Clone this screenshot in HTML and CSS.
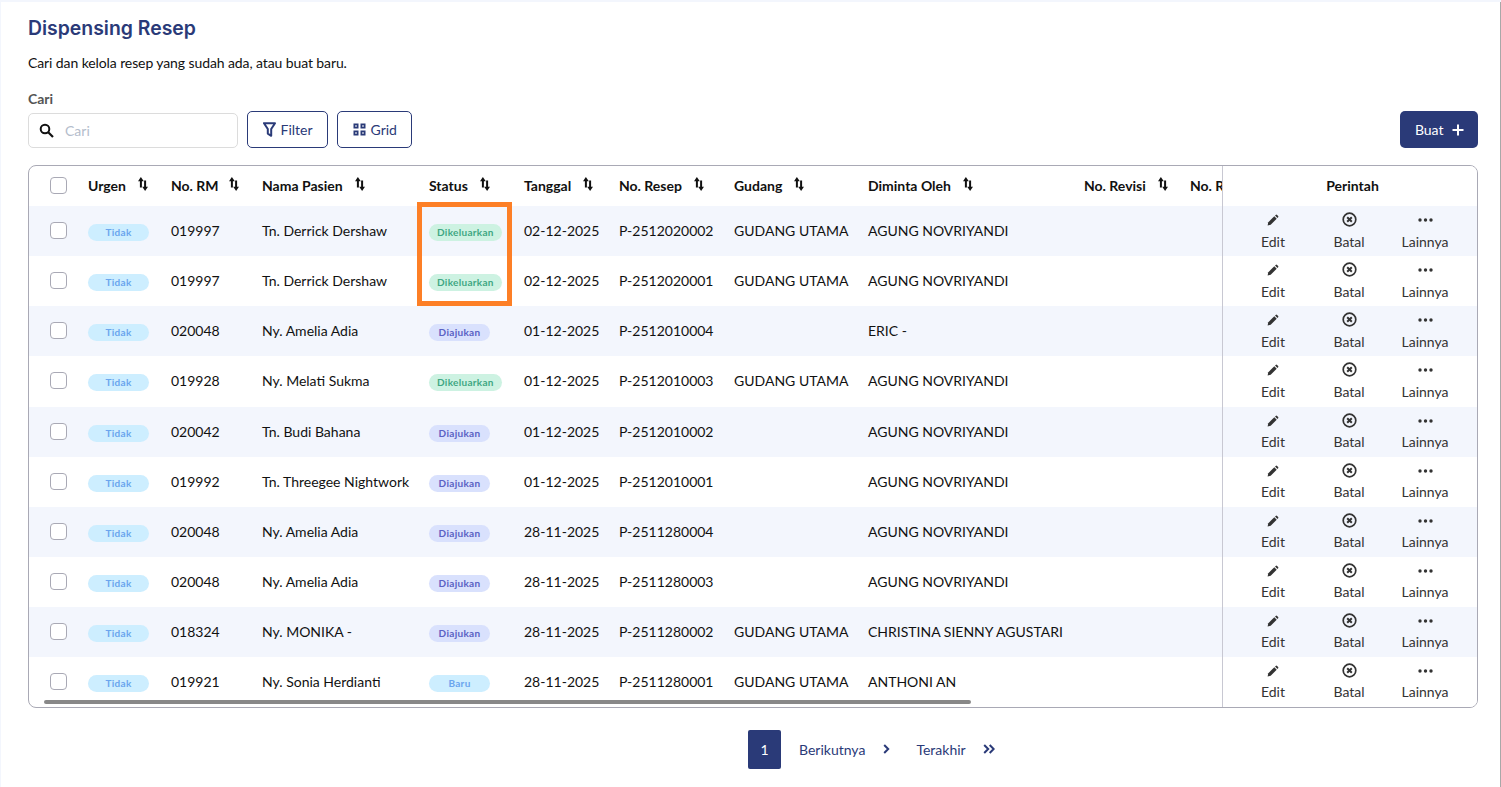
FILE: index.html
```html
<!DOCTYPE html>
<html lang="id">
<head>
<meta charset="utf-8">
<title>Dispensing Resep</title>
<link rel="stylesheet" href="styles.css">
</head>
<body>
<svg class="defs" width="0" height="0" aria-hidden="true">
  <symbol id="sort" viewBox="0 0 10 14"><path d="M1.900 10.500V3.500H3.900V10.500Z" fill="#111"/><path d="M2.900 0 5.800 4.200H0Z" fill="#111"/><path d="M6.100 3.500V10.500H8.100V3.500Z" fill="#111"/><path d="M7.100 14 4.200 9.800H10Z" fill="#111"/></symbol>
  <symbol id="edit" viewBox="0 0 12 12"><path d="M.6 11.400 1.300 8.300 7.300 2.300 9.700 4.700 3.700 10.700Z" fill="#333"/><path d="M8 1.600 8.700.9a1 1 0 0 1 1.400 0l1 1a1 1 0 0 1 0 1.400L10.400 4Z" fill="#333"/></symbol>
  <symbol id="cancel" viewBox="0 0 15 15"><circle cx="7.500" cy="7.500" r="6.300" fill="none" stroke="#333" stroke-width="1.700"/><path d="M5.200 5.200l4.600 4.600M9.800 5.200l-4.600 4.600" stroke="#333" stroke-width="2"/></symbol>
  <symbol id="more" viewBox="0 0 15 4"><circle cx="2" cy="2" r="1.700" fill="#333"/><circle cx="7.500" cy="2" r="1.700" fill="#333"/><circle cx="13" cy="2" r="1.700" fill="#333"/></symbol>
</svg>
<main class="page">
  <h1 class="title">Dispensing Resep</h1>
  <p class="subtitle">Cari dan kelola resep yang sudah ada, atau buat baru.</p>
  <div class="toolbar">
    <div class="search-group">
      <label class="search-label" for="q">Cari</label>
      <div class="search-box">
        <svg class="search-icon" width="15" height="15" viewBox="0 0 15 15"><circle cx="6" cy="6" r="4.300" fill="none" stroke="#111" stroke-width="2"/><path d="M9.200 9.200 14 14" stroke="#111" stroke-width="2.200"/></svg>
        <input id="q" class="search-input" placeholder="Cari">
      </div>
    </div>
    <button class="btn btn-outline"><svg width="13" height="15" viewBox="0 0 13 15"><path d="M1 1.200h11L8.200 7v6.800L4.800 11.600V7Z" fill="none" stroke="#2a3a78" stroke-width="2" stroke-linejoin="round"/></svg>Filter</button>
    <button class="btn btn-outline"><svg width="13" height="13" viewBox="0 0 13 13"><path d="M.5.5h5v5h-5ZM7.500.5h5v5h-5ZM.5 7.500h5v5h-5ZM7.500 7.500h5v5h-5Z" fill="#2a3a78"/><path d="M2.300 2.300h1.400v1.400H2.300ZM9.300 2.300h1.400v1.400H9.300ZM2.300 9.300h1.400v1.400H2.300ZM9.300 9.300h1.400v1.400H9.300Z" fill="#fff"/></svg>Grid</button>
    <button class="btn btn-primary">Buat<svg width="12" height="12" viewBox="0 0 12 12"><path d="M6 .5v11M.5 6h11" stroke="#fff" stroke-width="2"/></svg></button>
  </div>

  <section class="table">
    <div class="scroll">
      <div class="row head">
        <span class="cell"><i class="check"></i></span>
        <span class="cell">Urgen<svg class="sort"><use href="#sort"/></svg></span>
        <span class="cell">No. RM<svg class="sort sort-tight"><use href="#sort"/></svg></span>
        <span class="cell">Nama Pasien<svg class="sort"><use href="#sort"/></svg></span>
        <span class="cell">Status<svg class="sort"><use href="#sort"/></svg></span>
        <span class="cell">Tanggal<svg class="sort"><use href="#sort"/></svg></span>
        <span class="cell">No. Resep<svg class="sort"><use href="#sort"/></svg></span>
        <span class="cell">Gudang<svg class="sort"><use href="#sort"/></svg></span>
        <span class="cell">Diminta Oleh<svg class="sort"><use href="#sort"/></svg></span>
        <span class="cell">No. Revisi<svg class="sort"><use href="#sort"/></svg></span>
        <span class="cell">No. Racikan</span>
      </div>
      <div class="row"><span class="cell"><i class="check"></i></span><span class="cell"><b class="badge blue">Tidak</b></span><span class="cell">019997</span><span class="cell">Tn. Derrick Dershaw</span><span class="cell"><b class="badge green">Dikeluarkan</b></span><span class="cell">02-12-2025</span><span class="cell">P-2512020002</span><span class="cell">GUDANG UTAMA</span><span class="cell">AGUNG NOVRIYANDI</span><span class="cell"></span><span class="cell"></span></div>
      <div class="row"><span class="cell"><i class="check"></i></span><span class="cell"><b class="badge blue">Tidak</b></span><span class="cell">019997</span><span class="cell">Tn. Derrick Dershaw</span><span class="cell"><b class="badge green">Dikeluarkan</b></span><span class="cell">02-12-2025</span><span class="cell">P-2512020001</span><span class="cell">GUDANG UTAMA</span><span class="cell">AGUNG NOVRIYANDI</span><span class="cell"></span><span class="cell"></span></div>
      <div class="row"><span class="cell"><i class="check"></i></span><span class="cell"><b class="badge blue">Tidak</b></span><span class="cell">020048</span><span class="cell">Ny. Amelia Adia</span><span class="cell"><b class="badge indigo">Diajukan</b></span><span class="cell">01-12-2025</span><span class="cell">P-2512010004</span><span class="cell"></span><span class="cell">ERIC -</span><span class="cell"></span><span class="cell"></span></div>
      <div class="row"><span class="cell"><i class="check"></i></span><span class="cell"><b class="badge blue">Tidak</b></span><span class="cell">019928</span><span class="cell">Ny. Melati Sukma</span><span class="cell"><b class="badge green">Dikeluarkan</b></span><span class="cell">01-12-2025</span><span class="cell">P-2512010003</span><span class="cell">GUDANG UTAMA</span><span class="cell">AGUNG NOVRIYANDI</span><span class="cell"></span><span class="cell"></span></div>
      <div class="row"><span class="cell"><i class="check"></i></span><span class="cell"><b class="badge blue">Tidak</b></span><span class="cell">020042</span><span class="cell">Tn. Budi Bahana</span><span class="cell"><b class="badge indigo">Diajukan</b></span><span class="cell">01-12-2025</span><span class="cell">P-2512010002</span><span class="cell"></span><span class="cell">AGUNG NOVRIYANDI</span><span class="cell"></span><span class="cell"></span></div>
      <div class="row"><span class="cell"><i class="check"></i></span><span class="cell"><b class="badge blue">Tidak</b></span><span class="cell">019992</span><span class="cell">Tn. Threegee Nightwork</span><span class="cell"><b class="badge indigo">Diajukan</b></span><span class="cell">01-12-2025</span><span class="cell">P-2512010001</span><span class="cell"></span><span class="cell">AGUNG NOVRIYANDI</span><span class="cell"></span><span class="cell"></span></div>
      <div class="row"><span class="cell"><i class="check"></i></span><span class="cell"><b class="badge blue">Tidak</b></span><span class="cell">020048</span><span class="cell">Ny. Amelia Adia</span><span class="cell"><b class="badge indigo">Diajukan</b></span><span class="cell">28-11-2025</span><span class="cell">P-2511280004</span><span class="cell"></span><span class="cell">AGUNG NOVRIYANDI</span><span class="cell"></span><span class="cell"></span></div>
      <div class="row"><span class="cell"><i class="check"></i></span><span class="cell"><b class="badge blue">Tidak</b></span><span class="cell">020048</span><span class="cell">Ny. Amelia Adia</span><span class="cell"><b class="badge indigo">Diajukan</b></span><span class="cell">28-11-2025</span><span class="cell">P-2511280003</span><span class="cell"></span><span class="cell">AGUNG NOVRIYANDI</span><span class="cell"></span><span class="cell"></span></div>
      <div class="row"><span class="cell"><i class="check"></i></span><span class="cell"><b class="badge blue">Tidak</b></span><span class="cell">018324</span><span class="cell">Ny. MONIKA -</span><span class="cell"><b class="badge indigo">Diajukan</b></span><span class="cell">28-11-2025</span><span class="cell">P-2511280002</span><span class="cell">GUDANG UTAMA</span><span class="cell">CHRISTINA SIENNY AGUSTARI</span><span class="cell"></span><span class="cell"></span></div>
      <div class="row"><span class="cell"><i class="check"></i></span><span class="cell"><b class="badge blue">Tidak</b></span><span class="cell">019921</span><span class="cell">Ny. Sonia Herdianti</span><span class="cell"><b class="badge blue">Baru</b></span><span class="cell">28-11-2025</span><span class="cell">P-2511280001</span><span class="cell">GUDANG UTAMA</span><span class="cell">ANTHONI AN</span><span class="cell"></span><span class="cell"></span></div>
    </div>
    <div class="actions">
      <div class="actions-head">Perintah</div>
      <div class="action-row"><span class="act"><svg class="ic-edit"><use href="#edit"/></svg>Edit</span><span class="act"><svg class="ic-cancel"><use href="#cancel"/></svg>Batal</span><span class="act"><svg class="ic-more"><use href="#more"/></svg>Lainnya</span></div>
      <div class="action-row"><span class="act"><svg class="ic-edit"><use href="#edit"/></svg>Edit</span><span class="act"><svg class="ic-cancel"><use href="#cancel"/></svg>Batal</span><span class="act"><svg class="ic-more"><use href="#more"/></svg>Lainnya</span></div>
      <div class="action-row"><span class="act"><svg class="ic-edit"><use href="#edit"/></svg>Edit</span><span class="act"><svg class="ic-cancel"><use href="#cancel"/></svg>Batal</span><span class="act"><svg class="ic-more"><use href="#more"/></svg>Lainnya</span></div>
      <div class="action-row"><span class="act"><svg class="ic-edit"><use href="#edit"/></svg>Edit</span><span class="act"><svg class="ic-cancel"><use href="#cancel"/></svg>Batal</span><span class="act"><svg class="ic-more"><use href="#more"/></svg>Lainnya</span></div>
      <div class="action-row"><span class="act"><svg class="ic-edit"><use href="#edit"/></svg>Edit</span><span class="act"><svg class="ic-cancel"><use href="#cancel"/></svg>Batal</span><span class="act"><svg class="ic-more"><use href="#more"/></svg>Lainnya</span></div>
      <div class="action-row"><span class="act"><svg class="ic-edit"><use href="#edit"/></svg>Edit</span><span class="act"><svg class="ic-cancel"><use href="#cancel"/></svg>Batal</span><span class="act"><svg class="ic-more"><use href="#more"/></svg>Lainnya</span></div>
      <div class="action-row"><span class="act"><svg class="ic-edit"><use href="#edit"/></svg>Edit</span><span class="act"><svg class="ic-cancel"><use href="#cancel"/></svg>Batal</span><span class="act"><svg class="ic-more"><use href="#more"/></svg>Lainnya</span></div>
      <div class="action-row"><span class="act"><svg class="ic-edit"><use href="#edit"/></svg>Edit</span><span class="act"><svg class="ic-cancel"><use href="#cancel"/></svg>Batal</span><span class="act"><svg class="ic-more"><use href="#more"/></svg>Lainnya</span></div>
      <div class="action-row"><span class="act"><svg class="ic-edit"><use href="#edit"/></svg>Edit</span><span class="act"><svg class="ic-cancel"><use href="#cancel"/></svg>Batal</span><span class="act"><svg class="ic-more"><use href="#more"/></svg>Lainnya</span></div>
      <div class="action-row"><span class="act"><svg class="ic-edit"><use href="#edit"/></svg>Edit</span><span class="act"><svg class="ic-cancel"><use href="#cancel"/></svg>Batal</span><span class="act"><svg class="ic-more"><use href="#more"/></svg>Lainnya</span></div>
    </div>
    <div class="scrollbar"></div>
    <div class="highlight"></div>
  </section>

  <nav class="pager">
    <span class="page-current">1</span>
    <span class="page-link">Berikutnya<svg width="7" height="10" viewBox="0 0 7 10"><path d="M1.200 1 5.200 5l-4 4" fill="none" stroke="#2a3a78" stroke-width="2"/></svg></span>
    <span class="page-link page-last">Terakhir<svg width="12" height="10" viewBox="0 0 12 10"><path d="M1.200 1 5.200 5l-4 4M6.700 1l4 4-4 4" fill="none" stroke="#2a3a78" stroke-width="2"/></svg></span>
  </nav>
</main>
</body>
</html>
```

FILE: styles.css
```css
* { box-sizing: border-box; }
html, body { margin: 0; height: 100%; }
body {
  background: #f3f6fd;
  font-family: "Lato", "Liberation Sans", sans-serif;
  font-size: 14px;
  color: #111;
  overflow: hidden;
}
.defs { position: absolute; }
.page {
  margin: 2px 0 0 1px;
  height: 785px;
  background: #fff;
  border-right: 1px solid #a8a8a8;
  padding: 14px 22px 0 27px;
}
.title {
  margin: 0;
  font-family: "Inter", "Open Sans", sans-serif;
  font-size: 19.400px;
  font-weight: 600;
  line-height: 24px;
  color: #2a3a78;
}
.subtitle {
  margin: 13px 0 0;
  font-size: 14px;
  line-height: 20px;
  letter-spacing: -.1px;
  color: #111;
}
.toolbar {
  display: flex;
  align-items: flex-end;
  gap: 9px;
  margin-top: 18px;
}
.search-group { display: flex; flex-direction: column; width: 210px; }
.search-label { font-size: 14px; font-weight: 700; line-height: 16px; color: #555; margin-bottom: 6px; }
.search-box {
  display: flex;
  align-items: center;
  height: 35px;
  border: 1px solid #dcdcdc;
  border-radius: 5px;
  padding-left: 10px;
  background: #fff;
}
.search-icon { flex: none; }
.search-input {
  border: 0;
  outline: 0;
  min-width: 0;
  flex: 1;
  margin-left: 9px;
  font: 14px "Lato", sans-serif;
  color: #111;
}
.search-input::placeholder { color: #b4bdcc; }
.btn {
  display: flex;
  align-items: center;
  height: 37px;
  border-radius: 5px;
  font: 14px "Lato", sans-serif;
  padding: 0 14.500px;
}
.btn-outline { gap: 5px; background: #fff; color: #2a3a78; border: 1px solid #2a3a78; }
.btn-primary { gap: 8px; margin-left: auto; padding: 0 14.500px; background: #2a3a78; color: #fff; border: 0; }

.table {
  position: relative;
  display: flex;
  height: 543px;
  margin-top: 17px;
  border: 1px solid #a9a9b5;
  border-radius: 8px;
  overflow: hidden;
}
.scroll { flex: 1; min-width: 0; overflow: hidden; }
.row {
  display: grid;
  grid-template-columns: 49px 83px 91px 167px 95px 95px 115px 134px 216px 106px 120px;
  width: 1271px;
  height: 50.100px;
  padding-bottom: 1px;
  align-items: center;
  white-space: nowrap;
}
.row:nth-child(even) { background: #f3f6fd; }
.cell { display: flex; align-items: center; padding-left: 10px; }
.cell:first-child { padding-left: 21px; }
.head { height: 40.150px; padding-bottom: .5px; font-weight: 700; font-size: 14px; color: #111; }
.check {
  display: block;
  width: 17px;
  height: 17px;
  border: 1.500px solid #a9a9b5;
  border-radius: 4px;
  background: #fff;
}
.sort { width: 10px; height: 14px; margin-left: 12px; margin-top: -3px; flex: none; }
.sort-tight { margin-left: 10px; }
.badge {
  display: inline-block;
  min-width: 61px;
  height: 17px;
  padding: 0 8px;
  border-radius: 9px;
  font-size: 10px;
  font-weight: 700;
  line-height: 17px;
  letter-spacing: .3px;
  text-align: center;
  margin-top: 3.940px;
}
.blue { background: #cdeeff; color: #6aa5ee; }
.green { background: #cdf2e2; color: #3fa783; }
.indigo { background: #d9e1fd; color: #5a62c4; }

.actions { flex: none; width: 255px; border-left: 1px solid #c8c8d2; background: #fff; }
.actions-head { height: 40.150px; line-height: 40px; padding-left: 5px; text-align: center; font-weight: 700; font-size: 14px; }
.action-row {
  display: grid;
  grid-template-columns: repeat(3, 76px);
  padding-left: 12px;
  height: 50.100px;
}
.action-row:nth-child(even) { background: #f3f6fd; }
.act {
  display: flex;
  flex-direction: column;
  align-items: center;
  font-size: 14px;
  line-height: 18px;
  color: #333;
}
.act svg { flex: none; }
.ic-edit { width: 12px; height: 12px; margin: 8px 0 6.400px; }
.ic-cancel { width: 15px; height: 15px; margin: 6px 0 5.400px; }
.ic-more { width: 15px; height: 4px; margin: 12px 0 10.400px; }

.scrollbar {
  position: absolute;
  left: 15px;
  bottom: 3px;
  width: 927px;
  height: 4px;
  border-radius: 2px;
  background: #888;
}
.highlight {
  position: absolute;
  left: 388px;
  top: 36px;
  width: 95px;
  height: 104px;
  border: 5px solid #fd7f26;
}

.pager {
  display: flex;
  align-items: center;
  margin: 22px 0 0 720px;
  color: #2a3a78;
}
.page-current {
  width: 33px;
  height: 39px;
  line-height: 39px;
  text-align: center;
  background: #2a3a78;
  color: #fff;
  border-radius: 2px;
}
.page-link { display: flex; align-items: center; gap: 18px; margin-left: 18px; }
.page-link svg { margin-top: -1px; }
.page-last { margin-left: 26px; gap: 17px; }
```
